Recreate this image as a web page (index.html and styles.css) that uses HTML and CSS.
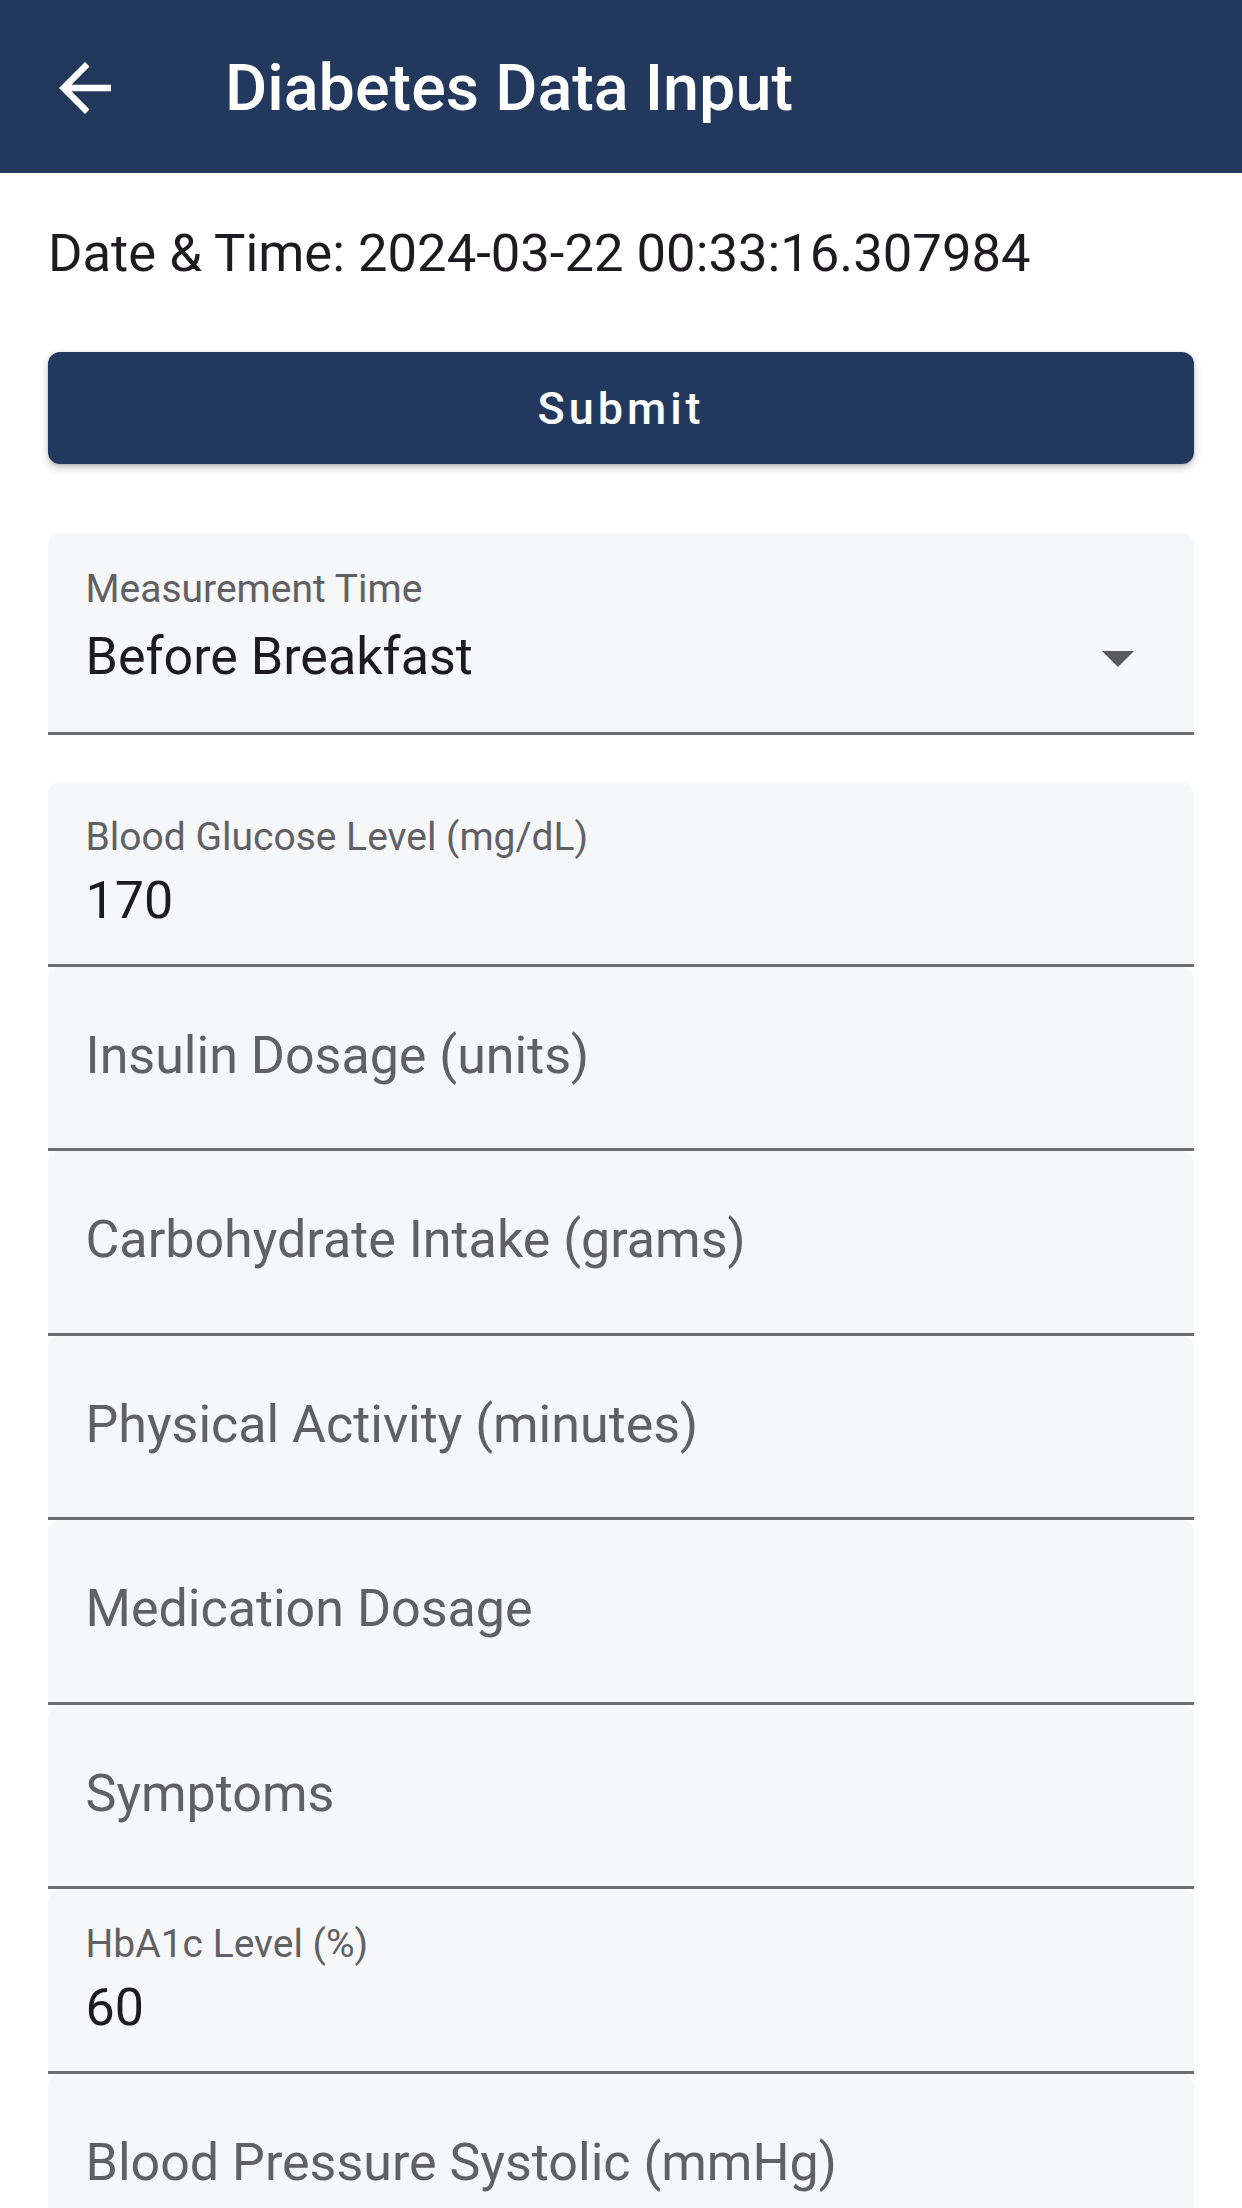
FILE: index.html
```html
<!DOCTYPE html>
<html lang="en">
<head>
<meta charset="utf-8">
<title>Diabetes Data Input</title>
<link rel="stylesheet" href="styles.css">
</head>
<body>
<header class="appbar">
  <svg class="back" viewBox="0 0 24 24" aria-hidden="true"><path d="M20 11H7.83l5.59-5.59L12 4l-8 8 8 8 1.41-1.41L7.83 13H20v-2z"/></svg>
  <h1 class="title">Diabetes Data Input</h1>
</header>
<main class="content">
  <p class="datetime">Date &amp; Time: 2024-03-22 00:33:16.307984</p>
  <button class="submit" type="button">Submit</button>

  <div class="dropdown">
    <div class="label">Measurement Time</div>
    <div class="drop-row">
      <span class="value">Before Breakfast</span>
      <span class="caret"></span>
    </div>
  </div>

  <div class="fields">
    <div class="field">
      <div class="label">Blood Glucose Level (mg/dL)</div>
      <div class="value">170</div>
    </div>
    <div class="field empty"><div class="hint">Insulin Dosage (units)</div></div>
    <div class="field empty"><div class="hint">Carbohydrate Intake (grams)</div></div>
    <div class="field empty"><div class="hint">Physical Activity (minutes)</div></div>
    <div class="field empty"><div class="hint">Medication Dosage</div></div>
    <div class="field empty"><div class="hint">Symptoms</div></div>
    <div class="field">
      <div class="label">HbA1c Level (%)</div>
      <div class="value">60</div>
    </div>
    <div class="field empty"><div class="hint">Blood Pressure Systolic (mmHg)</div></div>
  </div>
</main>
</body>
</html>
```

FILE: styles.css
```css
html, body {
  margin: 0;
  padding: 0;
  background: #ffffff;
  font-family: Roboto, "Noto Sans", "Liberation Sans", sans-serif;
  color: #1d1b20;
  overflow: hidden;
}

.appbar {
  height: 173px;
  background: #22395d;
  display: flex;
  align-items: center;
  box-sizing: border-box;
  padding-left: 46px;
  padding-top: 2px;
}

.back {
  width: 78px;
  height: 78px;
  fill: #ffffff;
  flex: none;
}

.title {
  margin: 0 0 0 101px;
  font-size: 64.7px;
  line-height: 76px;
  font-weight: 500;
  color: #ffffff;
}

.content {
  padding: 0 48px;
}

.datetime {
  margin: 50px 0 0;
  font-size: 52.6px;
  line-height: 60px;
  color: #1d1b20;
}

.submit {
  display: block;
  width: 100%;
  height: 112px;
  margin-top: 69px;
  border: none;
  border-radius: 12px;
  background: #22395d;
  color: #ffffff;
  font-family: Roboto, "Noto Sans", sans-serif;
  font-size: 45px;
  font-weight: 500;
  letter-spacing: 4px;
  box-shadow: 0 4px 8px rgba(0, 0, 0, 0.22), 0 1px 3px rgba(0, 0, 0, 0.15);
}

.dropdown {
  margin-top: 69px;
  height: 202px;
  box-sizing: border-box;
  background: #f6f7f9;
  border-radius: 12px 12px 0 0;
  border-bottom: 3px solid #6e6e72;
  padding: 33px 60px 0 37.5px;
}

.label {
  font-size: 39px;
  line-height: 47px;
  color: #616165;
}

.value {
  font-size: 52px;
  line-height: 60px;
  color: #1d1b20;
}

.drop-row {
  margin-top: 14px;
  display: flex;
  align-items: center;
  justify-content: space-between;
}

.caret {
  width: 0;
  height: 0;
  border-left: 16px solid transparent;
  border-right: 16px solid transparent;
  border-top: 16px solid #5a5a5e;
  margin-top: 4px;
}

.fields {
  margin-top: 47px;
}

.field {
  height: 184.5px;
  box-sizing: border-box;
  background: #f6f7f9;
  border-radius: 12px 12px 0 0;
  border-bottom: 3px solid #6e6e72;
  padding: 32px 37.5px 0;
}

.field .value {
  margin-top: 10px;
}

.field.empty {
  padding-top: 59px;
}

.hint {
  font-size: 52px;
  line-height: 60px;
  color: #616165;
}
```
